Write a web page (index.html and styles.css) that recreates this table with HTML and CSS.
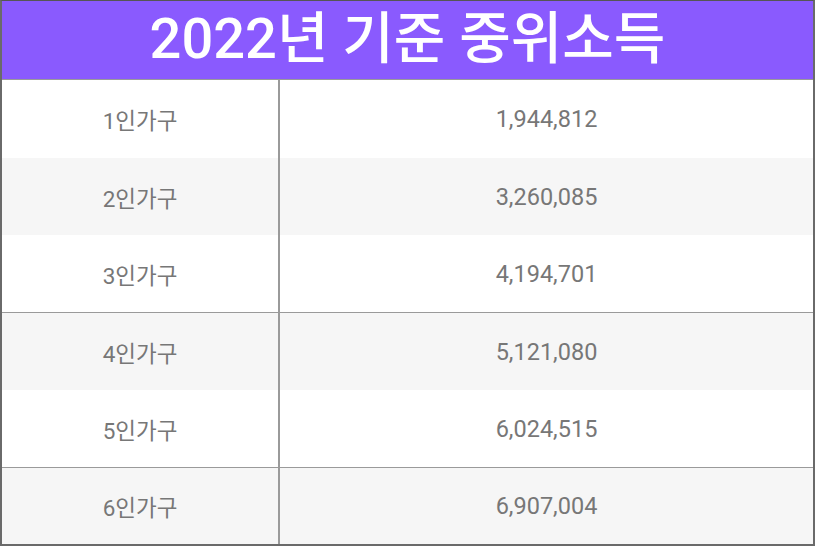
FILE: index.html
```html
<!DOCTYPE html>
<html lang="ko">
<head>
<meta charset="utf-8">
<title>2022년 기준 중위소득</title>
<link rel="stylesheet" href="styles.css">
</head>
<body>
<div class="table">
  <div class="title">2022년 기준 중위소득</div>
  <div class="row r1"><div class="cell key">1인가구</div><div class="cell val">1,944,812</div></div>
  <div class="row alt"><div class="cell key">2인가구</div><div class="cell val">3,260,085</div></div>
  <div class="row line"><div class="cell key">3인가구</div><div class="cell val">4,194,701</div></div>
  <div class="row alt"><div class="cell key">4인가구</div><div class="cell val">5,121,080</div></div>
  <div class="row line"><div class="cell key">5인가구</div><div class="cell val">6,024,515</div></div>
  <div class="row alt last"><div class="cell key">6인가구</div><div class="cell val">6,907,004</div></div>
</div>
</body>
</html>
```

FILE: styles.css
```css
html, body {
  margin: 0;
  padding: 0;
  background: #ffffff;
}
body {
  font-family: Roboto, "Noto Sans CJK KR", sans-serif;
}
.table {
  width: 815px;
  box-sizing: border-box;
  border-top: 1px solid #555555;
  border-left: 2px solid #6a6a6a;
  border-right: 2px solid #6a6a6a;
  border-bottom: 2px solid #6a6a6a;
  display: flex;
  flex-direction: column;
}
.title {
  height: 79px;
  background: #8a5afe;
  color: #ffffff;
  font-size: 56px;
  font-weight: 500;
  display: flex;
  align-items: center;
  justify-content: center;
  border-bottom: 1px solid #9a9a9a;
  line-height: 1;
  padding-bottom: 2px;
  box-sizing: border-box;
}
.row {
  display: grid;
  grid-template-columns: 278px 1fr;
  height: 77px;
  background: #ffffff;
}
.row.r1 {
  height: 78px;
}
.row.alt {
  background: #f6f6f6;
}
.row.line {
  height: 78px;
  border-bottom: 1px solid #9a9a9a;
  box-sizing: border-box;
}
.row.last {
  height: 76px;
}
.cell {
  display: flex;
  align-items: center;
  justify-content: center;
  color: #777777;
}
.key {
  font-size: 22.5px;
  border-right: 2px solid #9a9a9a;
}
.val {
  font-size: 23.5px;
}
```
